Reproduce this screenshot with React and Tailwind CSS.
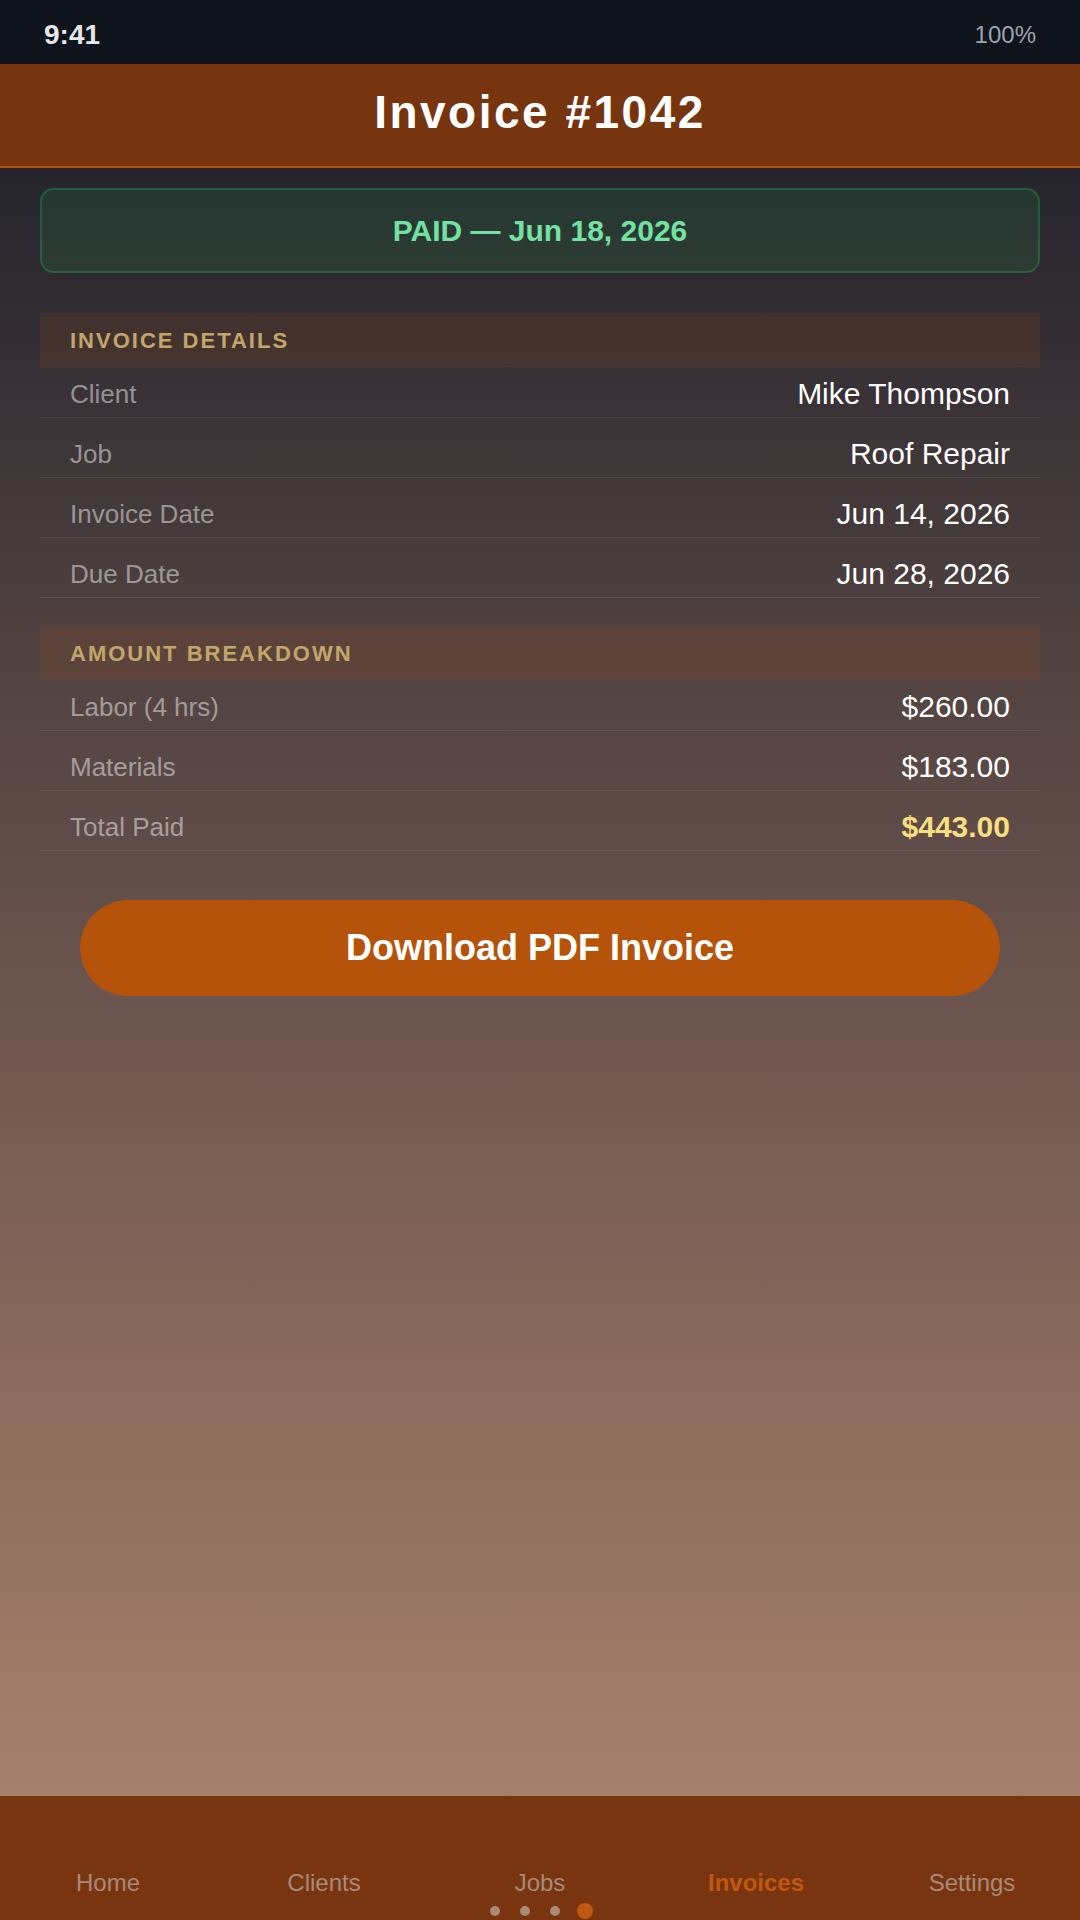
import React from "react";

const details = [
  ["Client", "Mike Thompson"],
  ["Job", "Roof Repair"],
  ["Invoice Date", "Jun 14, 2026"],
  ["Due Date", "Jun 28, 2026"],
];

const amounts = [
  ["Labor (4 hrs)", "$260.00", false],
  ["Materials", "$183.00", false],
  ["Total Paid", "$443.00", true],
];

function Row({ label, value, first, highlight }) {
  return (
    <div
      className={
        "flex items-center justify-between px-[30px] pb-[5px] border-b border-[rgba(255,255,255,0.08)] " +
        (first ? "pt-[9px]" : "pt-[18px]")
      }
    >
      <span className="text-[26px] leading-[36px] text-[rgba(255,255,255,0.47)]">{label}</span>
      <span
        className={
          "text-[30px] leading-[36px] " +
          (highlight ? "font-bold text-[#fadf80]" : "text-white")
        }
      >
        {value}
      </span>
    </div>
  );
}

function SectionHeader({ children }) {
  return (
    <div className="h-[54px] flex items-center px-[30px] bg-[rgba(180,83,9,0.12)]">
      <span className="text-[22px] font-bold tracking-[2px] uppercase text-[#c2a66b]">
        {children}
      </span>
    </div>
  );
}

export default function App() {
  const tabs = ["Home", "Clients", "Jobs", "Invoices", "Settings"];
  return (
    <div className="w-[1080px] h-[1920px] flex flex-col overflow-hidden font-[family-name:'Liberation_Sans',Arial,sans-serif]">
      {/* Status bar */}
      <div className="h-[64px] shrink-0 bg-[#0f131c] flex items-center justify-between px-[44px] pt-[6px]">
        <span className="text-[28px] font-bold text-[#e5e7eb]">9:41</span>
        <span className="text-[24px] text-[#9ca3af]">100%</span>
      </div>

      {/* Header */}
      <div className="h-[104px] shrink-0 bg-[#76350f] border-b-2 border-[#b45309] flex items-center justify-center pb-[6px]">
        <h1 className="text-[46px] leading-[52px] font-bold tracking-[2.5px] text-white">
          Invoice #1042
        </h1>
      </div>

      {/* Main */}
      <div className="flex-1 px-[40px] pt-[20px] bg-[linear-gradient(to_bottom,#25242c_0%,#4b3e3e_26%,#8c6c5e_76%,#a5806c_100%)]">
        <div className="h-[85px] rounded-[14px] border-2 border-[rgba(34,197,94,0.26)] bg-[rgba(34,197,94,0.11)] flex items-center justify-center">
          <span className="text-[30px] font-bold text-[#73e2a1]">PAID — Jun 18, 2026</span>
        </div>

        <div className="mt-[40px]">
          <SectionHeader>Invoice Details</SectionHeader>
          {details.map(([l, v], i) => (
            <Row key={l} label={l} value={v} first={i === 0} />
          ))}
        </div>

        <div className="mt-[28px]">
          <SectionHeader>Amount Breakdown</SectionHeader>
          {amounts.map(([l, v, h], i) => (
            <Row key={l} label={l} value={v} first={i === 0} highlight={h} />
          ))}
        </div>

        <div className="px-[40px] mt-[49px]">
          <button className="w-full h-[96px] rounded-full bg-[#b45309] text-white text-[36px] font-bold flex items-center justify-center">
            Download PDF Invoice
          </button>
        </div>
      </div>

      {/* Bottom nav */}
      <div className="h-[124px] shrink-0 bg-[#78350f] flex flex-col">
        <div className="grid grid-cols-5 pt-[73px]">
          {tabs.map((t) => (
            <div
              key={t}
              className={
                "text-center text-[24px] leading-[28px] " +
                (t === "Invoices" ? "font-bold text-[#c0590f]" : "text-[#a98a79]")
              }
            >
              {t}
            </div>
          ))}
        </div>
        <div className="flex justify-center mt-[6px]">
          {[0, 1, 2, 3].map((i) => (
            <div key={i} className="w-[30px] h-[16px] flex items-center justify-center">
              <div
                className={
                  i === 3
                    ? "w-[16px] h-[16px] rounded-full bg-[#c0590f]"
                    : "w-[10px] h-[10px] rounded-full bg-[#a98a79]"
                }
              />
            </div>
          ))}
        </div>
      </div>
    </div>
  );
}
